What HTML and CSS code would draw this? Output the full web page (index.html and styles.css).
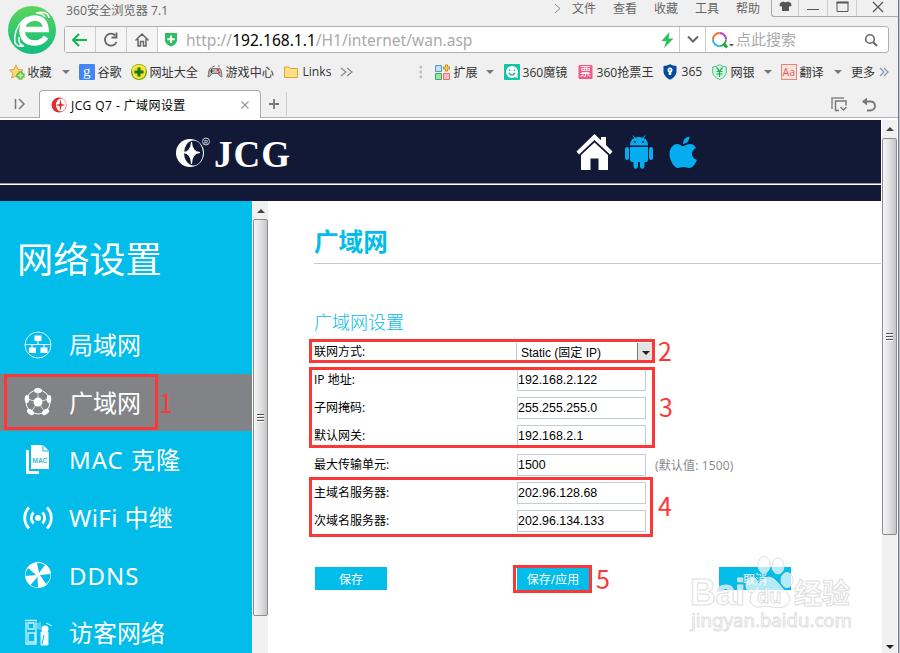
FILE: index.html
```html
<!DOCTYPE html>
<html lang="zh-CN">
<head>
    <meta charset="UTF-8">
    <title>JCG Q7 - 广域网设置</title>
    <link rel="stylesheet" href="styles.css">
</head>
<body>
    <div class="window">
        <svg class="browser-logo" width="50" height="50" viewBox="0 0 50 50">
            <defs>
                <linearGradient id="logoGreen" x1="0" y1="0" x2="0" y2="1">
                    <stop offset="0" stop-color="#5bd45c"/>
                    <stop offset="1" stop-color="#12bd80"/>
                </linearGradient>
            </defs>
            <circle cx="25" cy="25" r="24" fill="url(#logoGreen)"/>
            <path d="M18 24.500H39Q38 13 27.500 13Q15.500 14 15 26Q16 38 28 38Q35 38 39 32" fill="none" stroke="#fff" stroke-width="5.500"/>
            <path d="M42 13Q41 5 29 8Q36 8 38 12M20 12Q9 20 8 31Q6 43 17 41Q11 40 12 32" fill="none" stroke="#fff" stroke-width="1.500"/>
        </svg>

        <div class="title-bar">
            <span class="title">360安全浏览器 7.1</span>
            <svg class="menu-more" width="8" height="12" viewBox="0 0 8 12"><path d="M1 2L6 6.500L1 11" fill="none" stroke="#888"/></svg>
            <nav class="menu">
                <span>文件</span><span>查看</span><span>收藏</span><span>工具</span><span>帮助</span>
            </nav>
            <div class="controls">
                <span><svg width="13" height="11" viewBox="0 0 13 11"><path d="M1 2L4 .5Q6.500 2 9 .5L12 2L12.500 5L10 5.500V10H3V5.500L.5 5Z" fill="#555"/></svg></span>
                <span><svg width="13" height="11" viewBox="0 0 13 11"><path d="M0 8.500H12" stroke="#555"/></svg></span>
                <span><svg width="13" height="11" viewBox="0 0 13 11"><path d="M1 1.500H12V10.500H1Z" fill="none" stroke="#555"/><path d="M.5 1.500H12.500" stroke="#555" stroke-width="2"/></svg></span>
                <span><svg width="12" height="12" viewBox="0 0 12 12"><path d="M1 1L11 11M11 1L1 11" stroke="#555" stroke-width="1.200"/></svg></span>
            </div>
        </div>

        <div class="address-bar">
            <button class="nav-btn"><svg width="18" height="16" viewBox="0 0 18 16"><path d="M8 2L2 8L8 14M2 8H16" fill="none" stroke="#10b552" stroke-width="2"/></svg></button>
            <button class="nav-btn"><svg width="16" height="16" viewBox="0 0 16 16"><path d="M12.500 3.700A6 6 0 1 0 13.500 10" fill="none" stroke="#666" stroke-width="1.800"/><path d="M8.500 5.500H13.500V0.500" fill="none" stroke="#666" stroke-width="1.800"/></svg></button>
            <button class="nav-btn"><svg width="16" height="16" viewBox="0 0 16 16"><path d="M1.500 8.500L8 2L14.500 8.500M4 7V14H6.500V9.500H9.500V14H12V7" fill="none" stroke="#666" stroke-width="1.500"/></svg></button>
            <div class="url">
                <svg width="14" height="15" viewBox="0 0 14 15"><path d="M1 1H13V9Q12 12.500 7 14.500Q2 12.500 1 9Z" fill="#2dbf5d"/><path d="M7 3.500V11M3.300 7.200H10.700" stroke="#fff" stroke-width="2"/></svg>
                <span class="url-text">http://<b>192.168.1.1</b>/H1/internet/wan.asp</span>
                <svg class="bolt" width="13" height="16" viewBox="0 0 13 16"><path d="M8.500 0L0.500 9H5.500L3 16L12.500 6.500H7.500Z" fill="#25c456"/></svg>
            </div>
            <div class="url-drop"><svg width="14" height="9" viewBox="0 0 14 9"><path d="M2 1.500L7 6.500L12 1.500" fill="none" stroke="#666" stroke-width="2"/></svg></div>
            <div class="search">
                <svg width="24" height="18" viewBox="0 0 24 18">
                    <g fill="none" stroke-width="2">
                        <path d="M8.500 2A6.500 6.500 0 0 1 15 8.500" stroke="#b43bd0"/>
                        <path d="M15 8.500A6.500 6.500 0 0 1 8.500 15" stroke="#36b64a"/>
                        <path d="M8.500 15A6.500 6.500 0 0 1 2 8.500" stroke="#20b5ee"/>
                        <path d="M2 8.500A6.500 6.500 0 0 1 8.500 2" stroke="#f86b25"/>
                        <path d="M12.500 12.500L16 16.500" stroke="#1ba839" stroke-width="3"/>
                    </g>
                    <path d="M18 13H23L20.500 15.500Z" fill="#555"/>
                </svg>
                <span>点此搜索</span>
                <svg class="magnifier" width="14" height="14" viewBox="0 0 14 14"><circle cx="6" cy="6" r="4.300" fill="none" stroke="#666" stroke-width="1.600"/><path d="M9 9L13 13" stroke="#666" stroke-width="2"/></svg>
            </div>
        </div>

        <div class="bookmarks">
            <div class="bookmark"><svg width="16" height="16" viewBox="0 0 16 16"><path d="M7 .8L9 5.500L14 6L10 9.500L11.500 14L7 12L2.500 14L4 9.500L.5 6L5 5.500Z" fill="#ffd77a" stroke="#e0a242"/><path d="M11.500 7.500V15.500M7.500 11.500H15.500" stroke="#49a52d" stroke-width="4"/><path d="M11.500 8.500V14.500M8.500 11.500H14.500" stroke="#b5f294" stroke-width="2"/></svg>收藏</div>
            <i class="caret"></i>
            <div class="bookmark"><svg width="16" height="16" viewBox="0 0 16 16"><rect width="16" height="16" rx="1" fill="#4285f4"/><text x="4" y="11.500" font-family="Liberation Serif" font-size="15" fill="#fff">g</text></svg>谷歌</div>
            <div class="bookmark"><svg width="16" height="16" viewBox="0 0 16 16"><circle cx="8" cy="8" r="8" fill="#5eaa18"/><path d="M1 5A8 8 0 0 1 15 5L14 11A7 7 0 0 1 2 12Z" fill="#ffe42b"/><circle cx="8" cy="8" r="5" fill="#f9df24"/><path d="M8 3.500V12.500M3.500 8H12.500" stroke="#17752a" stroke-width="3"/></svg>网址大全</div>
            <div class="bookmark"><svg width="16" height="16" viewBox="0 0 16 16"><path d="M1 13L2 6Q3 3 6 4.500H10Q13 3 14 6L15 13Q13 13 11 9.500H5Q3 13 1 13Z" fill="#bbb" stroke="#777"/><path d="M4.500 5V9M2.500 7H6.500" stroke="#444"/><circle cx="11" cy="6" r="1.300" fill="#e23737"/><circle cx="12" cy="8.500" r="1" fill="#d03030"/><path d="M5 3L8 2M12 3V1" stroke="#777"/></svg>游戏中心</div>
            <div class="bookmark"><svg width="16" height="16" viewBox="0 0 16 16"><path d="M.5 13.500V3H5L6.500 4.500H13.500V13.500Z" fill="#ffe083" stroke="#d7a33a"/></svg>Links</div>
            <svg width="13" height="12" viewBox="0 0 13 12"><path d="M1 2L6 6L1 10M7 2L12 6L7 10" fill="none" stroke="#888" stroke-width="1.200"/></svg>
            <svg width="4" height="14" viewBox="0 0 4 14"><path d="M.5 2H3M.5 7H3M.5 12H3" stroke="#bbb" stroke-width="2.500"/></svg>
            <div class="bookmark"><svg width="16" height="16" viewBox="0 0 16 16"><path d="M.5 1.500H6.500V7.500H.5Z" fill="#bfe5fa" stroke="#5599c7"/><path d="M.5 9.500H6.500V15.500H.5Z" fill="#9be4ae" stroke="#42a45d"/><path d="M8.500 9.500H14.500V15.500H8.500Z" fill="#fbb" stroke="#de7676"/><path d="M11.500 .5V7.500M8 4H15" stroke="#c99229" stroke-width="3"/><path d="M11.500 1.500V6.500M9 4H14" stroke="#ffe34e"/></svg>扩展</div>
            <i class="caret"></i>
            <div class="bookmark"><svg width="16" height="16" viewBox="0 0 16 16"><rect width="16" height="16" rx="1" fill="#10c6a3"/><circle cx="8" cy="8" r="6" fill="#fff"/><path d="M11 13L14 14L13 10Z" fill="#fff"/><path d="M5 9Q8 13 11 9M5.500 5.500V7M10.500 5.500V7" fill="none" stroke="#10b999" stroke-width="1.400"/></svg>360魔镜</div>
            <div class="bookmark"><svg width="16" height="16" viewBox="0 0 16 16"><rect x=".5" y="1" width="14" height="14" rx="1" fill="#f35988"/><text x="2" y="12" font-size="11" fill="#fff">票</text></svg>360抢票王</div>
            <div class="bookmark"><svg width="16" height="16" viewBox="0 0 16 16"><path d="M.5 2Q4 2 7 .3Q10 2 13.500 2V8Q13 13 7 15.700Q1 13 .5 8Z" fill="#07499c"/><circle cx="7" cy="6" r="2.500" fill="#fff"/><path d="M7 5V11" stroke="#fff" stroke-width="2.500"/><circle cx="7" cy="6" r=".8" fill="#07499c"/></svg>365</div>
            <div class="bookmark"><svg width="16" height="16" viewBox="0 0 16 16"><path d="M.7 3Q4 3 7.500 .7Q11 3 14.300 3V8Q14 13 7.500 15.500Q1 13 .7 8Z" fill="#d0f7e0" stroke="#4fbf80"/><path d="M4.500 3.500L7.500 7L10.500 3.500M7.500 7V13M4.500 7.500H10.500M4.500 10H10.500" fill="none" stroke="#29a563" stroke-width="1.200"/></svg>网银</div>
            <i class="caret"></i>
            <div class="bookmark"><svg width="16" height="16" viewBox="0 0 16 16"><rect x=".5" y=".5" width="15" height="15" fill="#fde1dd" stroke="#db8982"/><text x="1.500" y="12" font-family="Open Sans" font-size="10.500" fill="#d85d58">Aa</text></svg>翻译</div>
            <i class="caret"></i>
            <div class="bookmark">更多</div>
            <svg width="10" height="12" viewBox="0 0 10 12"><path d="M1 2L5 6L1 10M5 2L9 6L5 10" fill="none" stroke="#8797a8" stroke-width="1.200"/></svg>
        </div>

        <div class="tab-bar">
            <svg class="panel-icon" width="12" height="12" viewBox="0 0 12 12"><path d="M1.500 1V11M5 1L10 6L5 11" fill="none" stroke="#777" stroke-width="1.500"/></svg>
            <div class="tab">
                <svg width="16" height="16" viewBox="0 0 16 16"><circle cx="8" cy="8" r="7.500" fill="#e02f2f"/><ellipse cx="10" cy="8" rx="5" ry="6.500" fill="#fff"/><path d="M9.500 2L10.500 7L14.500 8L10.500 9L9.500 14L8.500 9L4.500 8L8.500 7Z" fill="#e02f2f"/></svg>
                <span>JCG Q7 - 广域网设置</span>
                <svg class="close" width="10" height="10" viewBox="0 0 10 10"><path d="M1.500 1.500L8.500 8.500M8.500 1.500L1.500 8.500" stroke="#999" stroke-width="1.200"/></svg>
            </div>
            <div class="new-tab"><svg width="12" height="12" viewBox="0 0 12 12"><path d="M6 1V11M1 6H11" stroke="#777" stroke-width="1.800"/></svg></div>
            <svg class="restore" width="17" height="15" viewBox="0 0 17 15"><path d="M1 12V1H13" fill="none" stroke="#888" stroke-width="1.500"/><path d="M8 13.500H4.500V4H15V8.500M9.500 10L12.500 13L15.500 10" fill="none" stroke="#777" stroke-width="1.500"/></svg>
            <svg width="16" height="15" viewBox="0 0 16 15"><path d="M2 4.500H10Q14 5 14 9Q14 13 9 13.500H6" fill="none" stroke="#777" stroke-width="1.800"/><path d="M1 4.500L6 .5V8.500Z" fill="#777"/></svg>
        </div>

        <div class="viewport">
            <div class="page">
                <header class="site-header">
                    <div class="brand">
                        <svg width="38" height="32" viewBox="0 0 38 32">
                            <circle cx="15" cy="17" r="14" fill="#fff"/>
                            <ellipse cx="18.500" cy="17" rx="9.500" ry="12.500" fill="#111936"/>
                            <path d="M16.500 6Q17 16 25 16.500Q17 17 16.500 28Q16 17 8 16.500Q16 16 16.500 6Z" fill="#fff" stroke="#fff"/>
                            <circle cx="31" cy="5.500" r="3.500" fill="none" stroke="#ccd"/>
                            <text x="29" y="7.500" font-family="Liberation Sans" font-size="5.500" fill="#fff">R</text>
                        </svg>
                        <span>JCG</span>
                    </div>
                    <svg class="home" width="37" height="37" viewBox="0 0 37 37"><path d="M18.500 0L25 6.300V3H30V11L36.500 17.500L34 20.500L18.500 6L3 20.500L.5 17.500Z" fill="#fff"/><path d="M18.500 8.500L32 21V36H22.500V24.500H14.500V36H5V21Z" fill="#fff"/></svg>
                    <svg class="android" width="28" height="34" viewBox="0 0 28 34">
                        <g fill="#05acef">
                            <path d="M5 10.500Q5 2 14 2Q23 2 23 10.500Z"/>
                            <path d="M5 12H23V25Q23 27 21 27H19.500V31.500A2.200 2.200 0 0 1 15 31.500V27H13V31.500A2.200 2.200 0 0 1 8.500 31.500V27H7Q5 27 5 25Z"/>
                            <rect y="12" width="4" height="13" rx="2"/><rect x="24" y="12" width="4" height="13" rx="2"/>
                        </g>
                        <path d="M10 3.500L8 .5M18 3.500L20 .5" stroke="#05acef"/>
                        <circle cx="10" cy="7" r="1" fill="#111936"/><circle cx="18" cy="7" r="1" fill="#111936"/>
                    </svg>
                    <svg width="28" height="33" viewBox="0 0 28 33"><path d="M14 10C16 10 18 8 21 8C24 8 26 10 27 12C21 15 22 22 28 24C25 31 22 32 20 32C18 32 17 31 14.500 31C12 31 11 32 9 32C5 32 .5 24 .5 18C.5 11 5 8 8 8C11 8 12 10 14 10Z" fill="#05acef"/><path d="M14 8Q14 1 20.500 .5Q20.500 7 14 8Z" fill="#05acef"/></svg>
                </header>

                <div class="columns">
                    <aside class="sidebar">
                        <h1>网络设置</h1>
                        <div class="side-item"><svg width="32" height="32" viewBox="0 0 32 32"><circle cx="16" cy="16" r="13" fill="none" stroke="#d7f7ff"/><path d="M3 15.500H29M16 10V16M10 16V20M22 16V20" stroke="#e8faff" stroke-width="1.200"/><rect x="12.500" y="6.500" width="7" height="5.500" fill="#fff"/><rect x="7" y="18.500" width="7" height="5.500" fill="#fff"/><rect x="18.500" y="18.500" width="7" height="5.500" fill="#fff"/></svg>局域网</div>
                        <div class="side-item active"><svg width="32" height="32" viewBox="0 0 32 32"><circle cx="16" cy="16" r="12" fill="none" stroke="#fff"/><path d="M16 16V4M16 16L27 13M16 16L23 26M16 16L9 26M16 16L5 13" stroke="#ddd"/><circle cx="16" cy="16" r="4.500" fill="#fff"/><ellipse cx="16" cy="4.500" rx="4" ry="2.500" fill="#fff"/><ellipse cx="27" cy="13" rx="2.300" ry="4" fill="#fff"/><ellipse cx="5" cy="13" rx="2.300" ry="4" fill="#fff"/><ellipse cx="23.500" cy="26" rx="4" ry="2.500" transform="rotate(-35 23.500 26)" fill="#fff"/><ellipse cx="8.500" cy="26" rx="4" ry="2.500" transform="rotate(35 8.500 26)" fill="#fff"/></svg>广域网</div>
                        <div class="side-item wide"><svg width="32" height="32" viewBox="0 0 32 32"><path d="M4 6H7V27H17V30H4Z" fill="#fff"/><path d="M9 1H21L27 7V25H9Z" fill="#fff"/><path d="M21 1V7H27" fill="none" stroke="#02bce9"/><text x="10.500" y="19" font-family="Liberation Sans" font-size="6.500" letter-spacing="0" font-weight="bold" fill="#38bddd">MAC</text></svg>MAC 克隆</div>
                        <div class="side-item wifi"><svg width="32" height="32" viewBox="0 0 32 32"><circle cx="16" cy="16" r="3" fill="#fff"/><g fill="none" stroke="#fff" stroke-width="2.800"><path d="M11.500 10.500A8 8 0 0 0 11.500 21.500M20.500 10.500A8 8 0 0 1 20.500 21.500M7 5.500A15 15 0 0 0 7 26.500M25 5.500A15 15 0 0 1 25 26.500"/></g></svg>WiFi 中继</div>
                        <div class="side-item wide"><svg width="32" height="32" viewBox="0 0 32 32"><circle cx="16" cy="16" r="13" fill="#fff"/><g fill="#02bce9"><path d="M17 14L15 4A12.500 12.500 0 0 1 23 6Z"/><path d="M18 16L28.500 15A12.500 12.500 0 0 1 24 25Z"/><path d="M15.500 18L16 28.500A12.500 12.500 0 0 1 8.500 26Z"/><path d="M14 16L3.500 17A12.500 12.500 0 0 1 6 9Z"/></g></svg>DDNS</div>
                        <div class="side-item"><svg width="32" height="32" viewBox="0 0 32 32"><path d="M3 3.500H15M4 5V27H14V5M6 6H12V12H6ZM6 16H13V25H6Z" fill="none" stroke="#c9f3ff" stroke-width="1.300"/><path d="M16 6V12M18 5V13" stroke="#9ee8f8"/><circle cx="23" cy="12" r="3.500" fill="#fff"/><path d="M19 15H26V28H19ZM24 6L30 9" fill="#fff" stroke="#d8f7ff"/><path d="M20 27L22 18" stroke="#02bce9"/></svg>访客网络</div>
                    </aside>
                    <div class="scrollbar side-scroll"><i class="arrow up"></i><div class="thumb"></div></div>

                    <main class="content">
                        <h2>广域网</h2>
                        <h3>广域网设置</h3>
                        <form class="settings">
                            <div class="field mode">
                                <label>联网方式:</label>
                                <div class="select"><span>Static (<em>固定</em> IP)</span><b><i class="arrow down"></i></b></div>
                            </div>
                            <div class="field"><label>IP 地址:</label><input value="192.168.2.122"></div>
                            <div class="field"><label>子网掩码:</label><input value="255.255.255.0"></div>
                            <div class="field"><label>默认网关:</label><input value="192.168.2.1"></div>
                            <div class="field"><label>最大传输单元:</label><input value="1500"><span class="hint">(默认值: 1500)</span></div>
                            <div class="field"><label>主域名服务器:</label><input value="202.96.128.68"></div>
                            <div class="field"><label>次域名服务器:</label><input value="202.96.134.133"></div>
                            <div class="actions">
                                <button type="button">保存</button>
                                <button type="button">保存/应用</button>
                                <button type="button">取消</button>
                            </div>
                        </form>
                    </main>
                </div>
            </div>
            <div class="scrollbar page-scroll"><i class="arrow up"></i><div class="thumb"></div><i class="arrow down"></i></div>
        </div>
    </div>

    <!-- Step markers over the page -->
    <div class="mark mark-1"><span>1</span></div>
    <div class="mark mark-2"><span>2</span></div>
    <div class="mark mark-3"><span>3</span></div>
    <div class="mark mark-4"><span>4</span></div>
    <div class="mark mark-5"><span>5</span></div>

    <svg class="watermark" width="180" height="90" viewBox="0 0 180 90">
        <g fill="#fff" fill-opacity=".7" stroke="#dedede">
            <text x="9" y="56" font-family="Liberation Sans" font-size="36" font-weight="bold" textLength="55">Bai</text>
            <text x="113" y="55" font-family="Noto Sans CJK SC" font-size="28" font-weight="bold" textLength="56">经验</text>
            <text x="10" y="78" font-family="Noto Sans" font-size="17.500" textLength="161" lengthAdjust="spacingAndGlyphs" stroke-width=".9">jingyan.baidu.com</text>
            <ellipse cx="71" cy="36" rx="6" ry="8"/>
            <ellipse cx="83" cy="16" rx="6" ry="8.500"/>
            <ellipse cx="97" cy="17" rx="6" ry="8"/>
            <ellipse cx="106" cy="31" rx="6" ry="7.500"/>
            <path d="M78 34Q88 22 97 34Q101 39 106 44Q111 51 106 56Q101 60 92 58Q84 56 78 58Q70 58 69 51Q69 46 73 42Q76 40 78 34Z"/>
            <text x="76" y="54" font-family="Liberation Sans" font-size="20" font-weight="bold">du</text>
        </g>
    </svg>
</body>
</html>
```
FILE: styles.css
```css
* {
    margin: 0;
    padding: 0;
    box-sizing: border-box;
}

html, body {
    width: 900px;
    height: 653px;
    overflow: hidden;
    position: relative;
    background-color: #b5c8dc;
    font-family: "Open Sans", "Noto Sans CJK SC", sans-serif;
    font-size: 12px;
    color: #333;
}

svg {
    display: block;
    flex-shrink: 0;
    font-family: "Noto Sans CJK SC", sans-serif;
}

button {
    border: none;
    font-family: inherit;
}

.window {
    width: 899px;
    height: 653px;
    background-color: #f0f0f0;
    border-right: 1px solid #777;
    display: flex;
    flex-direction: column;
    position: relative;
}

.browser-logo {
    position: absolute;
    left: 7px;
    top: 5px;
}

/* Title and menus */
.title-bar {
    height: 26px;
    display: flex;
    align-items: flex-start;
    padding-left: 66px;
    line-height: 18px;
    color: #666;
}

.title {
    width: 488px;
    padding-top: 2px;
    font-size: 12.2px;
}

.menu-more {
    margin-top: 2px;
}

.menu {
    display: flex;
    gap: 17px;
    margin-left: 10px;
    width: 199px;
}

.controls {
    display: grid;
    grid-template-columns: 27px 29px 29px 1fr;
    flex: 1;
    height: 17px;
    border: 1px solid #aaa;
    border-top: none;
    border-right: none;
    border-bottom-left-radius: 3px;
}

.controls span {
    display: flex;
    justify-content: center;
    padding-top: 1px;
    border-right: 1px solid #ccc;
}

.controls span:last-child {
    border-right: none;
}

/* Address bar */
.address-bar {
    display: flex;
    flex-shrink: 0;
    width: 825px;
    height: 27px;
    margin-left: 64px;
    border: 1px solid #b0b0b0;
    border-radius: 3px;
    background-color: #fff;
}

.nav-btn {
    width: 31px;
    display: flex;
    align-items: center;
    justify-content: center;
    background-color: #f5f5f5;
    border-right: 1px solid #ccc;
}

.url {
    width: 522px;
    display: flex;
    align-items: center;
    padding-left: 6px;
    border-right: 1px solid #ccc;
}

.url-text {
    margin-left: 8px;
    font-family: "Noto Sans", sans-serif;
    font-size: 15.55px;
    color: #aaa;
}

.url-text b {
    font-weight: normal;
    color: #000;
}

.bolt {
    margin-left: auto;
    margin-right: 5px;
}

.url-drop {
    width: 26px;
    display: flex;
    align-items: center;
    justify-content: center;
    border-right: 1px solid #ccc;
}

.search {
    flex: 1;
    display: flex;
    align-items: center;
    padding-left: 5px;
    font-size: 15px;
    color: #aaa;
}

.search span {
    margin-left: 1px;
    line-height: 22px;
    padding-bottom: 2px;
}

.magnifier {
    margin-left: auto;
    margin-right: 10px;
}

/* Bookmarks */
.bookmarks {
    display: grid;
    grid-template-columns: 53px 17px 52px 76px 77px 56px 79px 16px 51px 18px 74px 85px 49px 52px 17px 53px 17px 28px 12px;
    align-items: center;
    height: 37px;
    flex-shrink: 0;
    padding-left: 9px;
}

.bookmark {
    display: flex;
    align-items: center;
    gap: 2.5px;
    font-size: 12.1px;
    white-space: nowrap;
}

.caret {
    border: 4px solid transparent;
    border-top-color: #777;
    border-bottom: none;
    width: 0;
}

/* Tabs */
.tab-bar {
    display: flex;
    align-items: center;
    height: 28px;
    flex-shrink: 0;
    border-bottom: 1px solid #b0b0b0;
}

.panel-icon {
    margin-left: 14px;
    width: 12px;
}

.tab {
    width: 222px;
    height: 28px;
    margin-left: 13px;
    display: flex;
    align-items: center;
    align-self: flex-start;
    padding: 0 10px 0 11px;
    border: 1px solid #aaa;
    border-bottom: none;
    border-radius: 4px 4px 0 0;
    background-color: #fff;
    color: #000;
}

.tab span {
    margin-left: 4px;
    letter-spacing: 0.42px;
}

.close {
    margin-left: auto;
}

.new-tab {
    width: 26px;
    height: 24px;
    display: flex;
    align-items: center;
    justify-content: center;
    border-right: 1px solid #ccc;
}

.restore {
    margin: 2px 13px 0 auto;
}

.restore + svg {
    margin: 2px 21px 0 0;
}

/* Router page */
.viewport {
    flex: 1;
    display: flex;
    padding-top: 2px;
    background-color: #fff;
}

.page {
    width: 881px;
    display: flex;
    flex-direction: column;
}

.site-header {
    height: 81px;
    display: flex;
    align-items: flex-start;
    background: linear-gradient(#999 0 1px, #fff 1px 2px) 0 63px / 100% 2px no-repeat #111936;
}

.brand {
    display: flex;
    margin-left: 175px;
    margin-top: 16px;
    width: 401px;
}

.brand span {
    font: bold 37px/38px "Liberation Serif", serif;
    letter-spacing: 1px;
    margin-left: 1px;
    color: #fff;
}

.home {
    margin-top: 14px;
}

.android {
    margin: 15px 16px 0 12px;
}

.android + svg {
    margin-top: 16px;
}

.columns {
    flex: 1;
    display: flex;
}

.sidebar {
    width: 252px;
    height: 452px;
    overflow: hidden;
    background-color: #02bce9;
    color: #fff;
}

.sidebar h1 {
    height: 115px;
    padding-left: 17px;
    font-size: 36.2px;
    font-weight: normal;
    line-height: 117px;
}

.side-item {
    display: flex;
    align-items: center;
    gap: 15px;
    height: 57.6px;
    padding-left: 22px;
    font-family: "Noto Sans", "Noto Sans CJK SC", sans-serif;
    font-size: 24px;
    line-height: 57px;
    white-space: nowrap;
}

.side-item.wide {
    letter-spacing: 1px;
}

.side-item.wifi {
    letter-spacing: 0.4px;
}

.side-item.active {
    background-color: #828387;
}

/* Scrollbars */
.scrollbar {
    width: 16px;
    display: flex;
    flex-direction: column;
    align-items: center;
    background-color: #f0f0f0;
    border-left: 1px solid #fff;
}

.arrow {
    width: 0;
    border: 4px solid transparent;
}

.arrow.up {
    border-top: none;
    border-bottom-color: #444;
    margin: 8px 0 6px;
}

.arrow.down {
    border-bottom: none;
    border-top-color: #222;
}

.thumb {
    width: 15px;
    height: 397px;
    display: flex;
    align-items: center;
    justify-content: center;
    border: 1px solid #8c8c8c;
    border-radius: 2px;
    background: linear-gradient(90deg, #f5f5f5, #e4e4e6 45%, #c5c5c8);
}

.thumb::after {
    content: "";
    width: 7px;
    height: 8px;
    background: repeating-linear-gradient(#555 0 1px, #fff 1px 2px, transparent 2px 3px);
}

.page-scroll .thumb {
    height: 397px;
}

.page-scroll .arrow.up {
    margin: 7px 0 7px;
}

.page-scroll .arrow.down {
    margin: auto 0 4px;
}

/* Settings form */
.content {
    flex: 1;
    padding-left: 46px;
    color: #000;
}

.content h2 {
    height: 63px;
    padding-top: 18px;
    border-bottom: 1px solid #bfcbd7;
    font-size: 24.6px;
    line-height: 45px;
    color: #02bce9;
}

.content h3 {
    margin-top: 47px;
    height: 29px;
    font-size: 18px;
    font-weight: 300;
    line-height: 23px;
    color: #02bce9;
}

.field {
    height: 28.2px;
    display: flex;
    align-items: center;
}

.field.mode {
    height: 26px;
}

.field label {
    width: 203px;
    line-height: 18px;
}

.field.mode label {
    width: 202px;
    padding-bottom: 2px;
}

.field input {
    width: 129px;
    height: 22px;
    border: 1px solid #c2cedb;
    font: 12.4px "Liberation Sans", sans-serif;
}

.select {
    width: 137px;
    height: 20px;
    display: flex;
    border-left: 1px solid #b9c8d8;
    font: 12px/20px "Liberation Sans", "Noto Sans CJK SC", sans-serif;
}

.select span {
    width: 120px;
    padding-left: 4px;
}

.select em {
    font-style: normal;
}

.select b {
    width: 16px;
    display: flex;
    align-items: center;
    justify-content: center;
    border-left: 1px solid #777;
    background-color: #e3e3e3;
}

.hint {
    margin-left: 9px;
    letter-spacing: 0.15px;
    color: #888;
}

.actions {
    display: flex;
    gap: 130px;
    margin-top: 32px;
    padding-left: 1px;
}

.actions button {
    width: 72px;
    height: 23px;
    background-color: #02bce9;
    color: #fff;
    font-size: 12px;
}

/* Step markers */
.mark {
    position: absolute;
    border: 3px solid #fb3838;
    font-family: "Noto Sans CJK SC", sans-serif;
    font-size: 25px;
    line-height: 24px;
    color: #fb3838;
}

.mark span {
    position: absolute;
    left: 100%;
    margin-left: 5px;
}

.mark-1 {
    left: 4px;
    top: 374px;
    width: 154px;
    height: 56px;
}

.mark-1 span {
    top: 13px;
    margin-left: 4px;
}

.mark-2 {
    left: 309px;
    top: 339px;
    width: 346px;
    height: 24px;
}

.mark-2 span {
    top: -4px;
    margin-left: 6px;
}

.mark-3 {
    left: 309px;
    top: 367px;
    width: 346px;
    height: 81px;
}

.mark-3 span {
    top: 24px;
    margin-left: 7px;
}

.mark-4 {
    left: 309px;
    top: 477px;
    width: 344px;
    height: 60px;
}

.mark-4 span {
    top: 13px;
    margin-left: 8px;
}

.mark-5 {
    left: 513px;
    top: 565px;
    width: 79px;
    height: 28px;
}

.mark-5 span {
    top: -2px;
    margin-left: 7px;
}

.watermark {
    position: absolute;
    left: 681px;
    top: 549px;
}
```
